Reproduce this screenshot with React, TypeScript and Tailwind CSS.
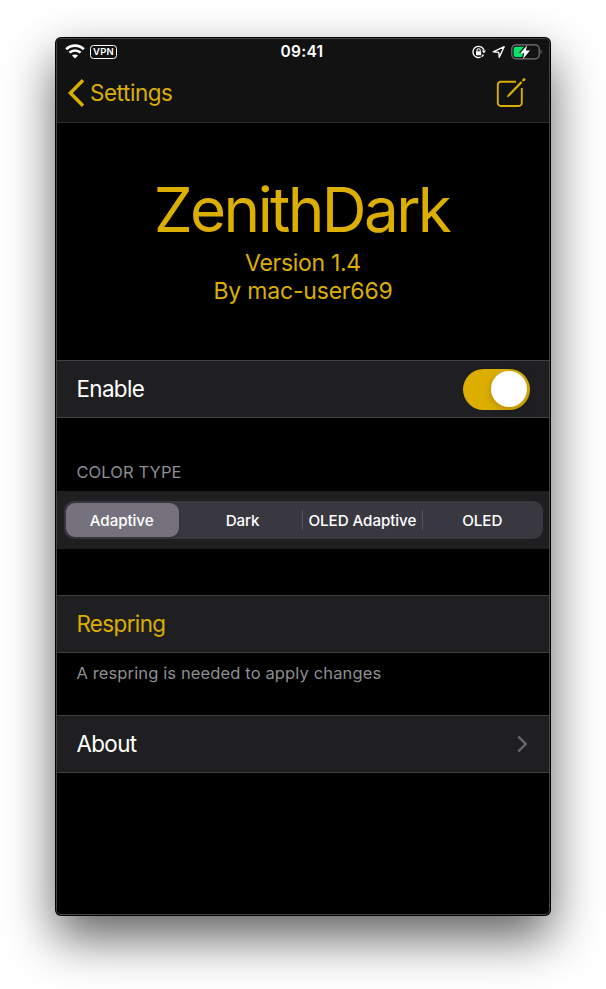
import React from "react";

function Wifi() {
  return (
    <svg width="20" height="15" viewBox="0 0 20 15" fill="none" stroke="#fff">
      <path d="M1.2 5.3 C6.2 0.5 13.8 0.5 18.8 5.3" strokeWidth="2.7" />
      <path d="M4.4 8.7 C7.6 5.7 12.4 5.7 15.6 8.7" strokeWidth="2.5" />
      <path d="M10 14.6 L6.9 11.6 C8.7 10 11.3 10 13.1 11.6 Z" fill="#fff" stroke="none" />
    </svg>
  );
}

function RotationLock() {
  return (
    <svg width="14" height="14" viewBox="0 0 14 14" fill="none" stroke="#fff">
      <path d="M8.6 12.2 A5.6 5.6 0 1 1 11.9 5.2" strokeWidth="1.3" />
      <path d="M11.4 9.6 A5.6 5.6 0 0 1 9.6 11.7" strokeWidth="1.3" />
      <path d="M9.9 5.5 H13.8 L12 8.6 Z" fill="#fff" stroke="none" />
      <rect x="4" y="6.3" width="5.2" height="4" rx=".5" fill="#fff" stroke="none" />
      <path d="M5 6.6 V5.3 A1.6 1.6 0 0 1 8.2 5.3 V6.6" strokeWidth="1.1" />
    </svg>
  );
}

function Location() {
  return (
    <svg width="14" height="14" viewBox="0 0 14 14" fill="none" stroke="#fff" strokeWidth="1.3" strokeLinejoin="round">
      <path d="M1.2 6.9 L12.2 1.7 L7.2 12.4 L6.8 7.3 Z" />
    </svg>
  );
}

function Battery() {
  return (
    <svg width="32" height="18" viewBox="0 0 32 18">
      <rect x="0.8" y="1.8" width="27.4" height="14" rx="4" fill="none" stroke="#77777a" strokeWidth="1.2" />
      <path d="M4.8 3.7 H13 L8 9.9 H12.2 L11 14 H4.8 A2.2 2.2 0 0 1 2.6 11.8 V5.9 A2.2 2.2 0 0 1 4.8 3.7 Z" fill="#0be36b" />
      <path d="M16.2 2.2 L9.2 10.3 H13.2 L12 15.9 L19 7.6 H14.8 Z" fill="#fff" />
      <path d="M29.6 6.4 C31 7 31 10.4 29.6 11 Z" fill="#77777a" />
    </svg>
  );
}

function Compose() {
  return (
    <svg width="30" height="30" viewBox="0 0 30 30" fill="none" stroke="#dbae00" strokeWidth="1.9">
      <path d="M20 3.8 H4.8 A3 3 0 0 0 1.8 6.8 V25 A3 3 0 0 0 4.8 28 H22.8 A3 3 0 0 0 25.8 25 V10" />
      <path d="M12.4 17.7 L25.6 4" strokeWidth="2.3" />
      <path d="M27.4 2.2 L28.1 1.5" strokeWidth="2.6" strokeLinecap="round" />
      <path d="M11 19.2 L11.5 17 L13.2 18.6 Z" fill="#dbae00" stroke="none" />
    </svg>
  );
}

const options = ["Adaptive", "Dark", "OLED Adaptive", "OLED"];

function Segments() {
  return (
    <div className="flex h-[58px] items-center bg-[#1f1f21] pl-[6.5px] pr-[6px]">
      <div className="grid h-[38px] w-full grid-cols-4 items-center rounded-[10px] bg-[#39373f] text-[15.2px] font-medium tracking-[-0.08px] text-white">
        {options.map((label, i) => (
          <div
            key={label}
            className={
              i === 0
                ? "ml-[2.5px] mr-[4.5px] flex h-[34px] items-center justify-center rounded-[9px] bg-[#75727d] shadow-sm"
                : i === 1
                  ? "flex h-5 items-center justify-center"
                  : "-ml-px flex h-5 items-center justify-center border-l border-[#55535c]"
            }
          >
            <span className="whitespace-nowrap pr-[1.5px] pt-[2px]">{label}</span>
          </div>
        ))}
      </div>
    </div>
  );
}

export default function App() {
  return (
    <div className="h-[989px] w-[606px] overflow-hidden bg-white pl-[55px] pt-[37px] font-['Inter',sans-serif]">
      <div className="h-[879px] w-[496px] rounded-[6px] bg-black p-px shadow-[0_22px_49px_rgba(0,0,0,0.62)]">
        <div className="flex h-full flex-col overflow-hidden rounded-[5px] border border-[#444446] text-[22.4px] text-white">
          <header className="flex h-[84px] shrink-0 flex-col border-b border-[#2d2d2f] bg-[#121213]">
            <div className="grid h-[25px] grid-cols-3 items-center pl-2 pr-[6px]">
              <div className="flex items-center gap-[5px]">
                <Wifi />
                <span className="flex h-[14px] w-[27px] items-center justify-center rounded-[3.5px] border-[1.3px] border-white pt-px text-[9.5px] font-semibold leading-none tracking-[0.3px]">VPN</span>
              </div>
              <time className="-ml-[4px] text-center text-[15.5px] font-semibold tracking-[0.3px]">09:41</time>
              <div className="flex items-center justify-end">
                <RotationLock />
                <span className="ml-[6px] mr-[5px]"><Location /></span>
                <Battery />
              </div>
            </div>
            <div className="flex h-[58px] items-center justify-between pl-[10px] pr-[23px] text-[#dbae00]">
              <div className="flex items-center gap-[5px]">
                <svg width="18" height="30" viewBox="0 0 18 30" fill="none" stroke="#dbae00" strokeWidth="3.4">
                  <path d="M16 2.2 L3.4 15 L16 27.8" />
                </svg>
                <span className="tracking-[-0.4px]">Settings</span>
              </div>
              <Compose />
            </div>
          </header>

          <section className="flex h-[237px] shrink-0 flex-col items-center pt-[49px] text-[#dbae00]">
            <h1 className="pr-[3px] text-[62px] leading-[76px] tracking-[-2.6px]">ZenithDark</h1>
            <p className="mt-[1px] text-[23px] leading-[28px] tracking-[-0.3px]">Version 1.4</p>
            <p className="text-[23px] leading-[28px] tracking-[-0.2px]">By mac-user669</p>
          </section>

          <div className="flex h-[58px] shrink-0 items-center justify-between border-y border-[#414143] bg-[#1f1f21] pl-[19.4px] pr-[19px]">
            <span className="tracking-[-0.6px]">Enable</span>
            <div className="flex h-[41px] w-[67px] items-center justify-end rounded-full bg-[#dbae00] pr-[3px]">
              <div className="h-[36px] w-[36px] rounded-full bg-white shadow-[0_3px_8px_rgba(0,0,0,0.18)]" />
            </div>
          </div>

          <div className="h-[73px] shrink-0 pl-[19.4px] pt-[43px] text-[16.5px] leading-[22px] tracking-[0.12px] text-[#8d8d93]">COLOR TYPE</div>
          <Segments />

          <div className="mt-[46px] flex h-[58px] shrink-0 items-center border-y border-[#3c3c3f] bg-[#1f1f21] pl-[19.4px] text-[#dbae00]">
            <span className="tracking-[-0.6px]">Respring</span>
          </div>
          <p className="h-[62px] shrink-0 pl-[19.4px] pt-[9px] text-[16.5px] leading-[22px] tracking-[0.13px] text-[#8d8d93]">A respring is needed to apply changes</p>

          <div className="flex h-[58px] shrink-0 items-center justify-between border-y border-[#414143] bg-[#1f1f21] pl-[19.4px] pr-[21px]">
            <span className="tracking-[-0.6px]">About</span>
            <svg width="11" height="18" viewBox="0 0 11 18" fill="none" stroke="#69696c" strokeWidth="2.4">
              <path d="M1.3 1.7 L8.8 9 L1.3 16.3" />
            </svg>
          </div>
        </div>
      </div>
    </div>
  );
}
